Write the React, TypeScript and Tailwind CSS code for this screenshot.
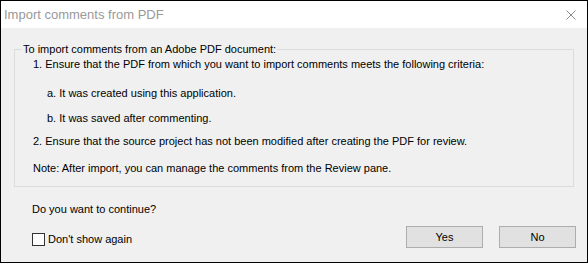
export default function App() {
  return (
    <div className="h-[263px] w-[588px] overflow-hidden border border-black bg-[#f0f0f0] font-['Liberation_Sans',Arial,sans-serif] text-[11px] text-black">
      {/* title bar */}
      <div className="flex h-[27px] items-center justify-between bg-white pl-[3px] pr-[11px]">
        <span className="text-[13px] text-[#999999]">Import comments from PDF</span>
        <svg width="10" height="10" viewBox="0 0 10 10" className="text-[#8a8a8a]">
          <path d="M0.5 0.5 L9.5 9.5 M9.5 0.5 L0.5 9.5" stroke="currentColor" strokeWidth="1" />
        </svg>
      </div>

      <div className="px-[13px] pt-[14px]">
        <fieldset className="h-[145px] border border-[#dcdcdc] pl-[18px]">
          <legend className="-ml-[11px] px-[1px] leading-[14px]">To import comments from an Adobe PDF document:</legend>
          <div className="flex flex-col pt-[1px] leading-[14px]">
            <p>1. Ensure that the PDF from which you want to import comments meets the following criteria:</p>
            <p className="mt-[15px] pl-[14px]">a. It was created using this application.</p>
            <p className="mt-[11px] pl-[14px]">b. It was saved after commenting.</p>
            <p className="mt-[9px]">2. Ensure that the source project has not been modified after creating the PDF for review.</p>
            <p className="mt-[13px]">Note: After import, you can manage the comments from the Review pane.</p>
          </div>
        </fieldset>
      </div>

      <div className="px-[31px] pt-[15px] leading-[14px]">Do you want to continue?</div>

      <div className="flex items-center justify-between pl-[31px] pr-[11px] pt-[10px]">
        <label className="flex items-center gap-[3px] self-start pt-[6px]">
          <span className="h-[13px] w-[13px] border border-[#333333] bg-white" />
          <span className="leading-[14px]">Don't show again</span>
        </label>
        <div className="flex gap-[16px]">
          <button className="h-[22px] w-[77px] border border-[#adadad] bg-[#e1e1e1]">Yes</button>
          <button className="h-[22px] w-[77px] border border-[#adadad] bg-[#e1e1e1]">No</button>
        </div>
      </div>
    </div>
  );
}
